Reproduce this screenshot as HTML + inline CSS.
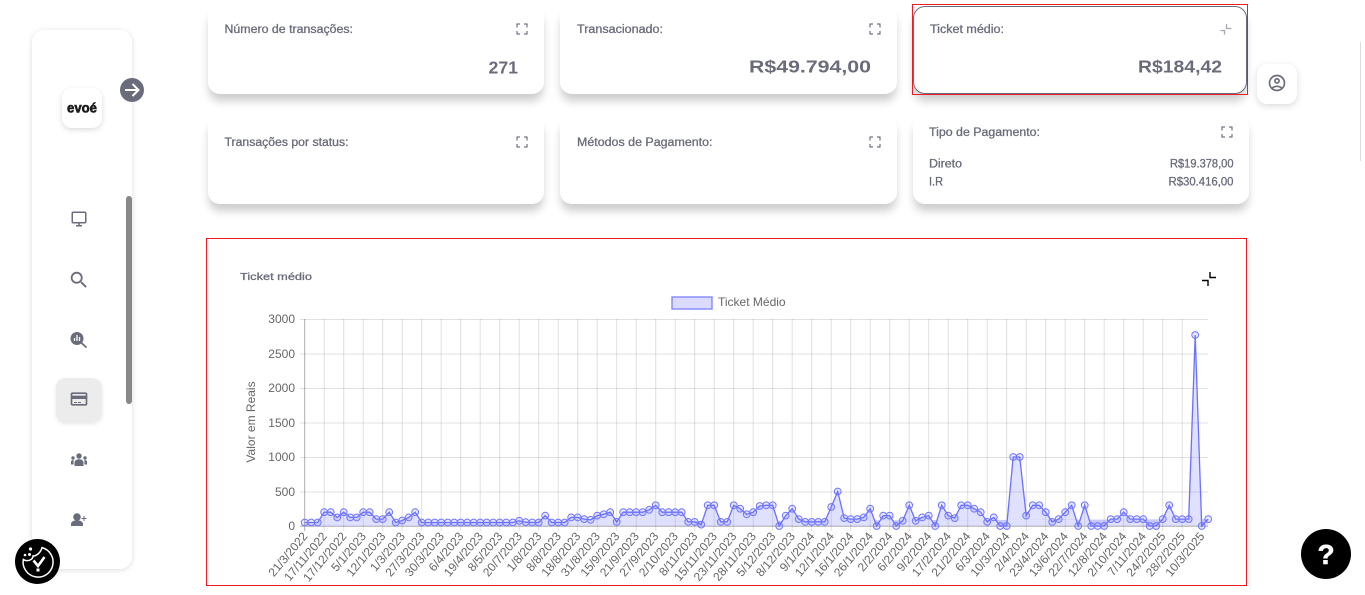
<!DOCTYPE html>
<html lang="pt-BR">
<head>
<meta charset="utf-8">
<title>Ticket médio</title>
<style>
html,body{margin:0;padding:0;background:#fff;width:1365px;height:595px;overflow:hidden}
.a{position:absolute;box-sizing:border-box;background:#fff}
.card{border-radius:12px;box-shadow:0 8px 9px -1px rgba(0,0,0,.2)}
#top{position:absolute;left:0;top:0}
svg text{font-family:"Liberation Sans",sans-serif}
.t{font-size:11.5px;fill:#6b6c7b;stroke:#6b6c7b;stroke-width:.3}
.v{font-size:17.5px;font-weight:700;fill:#6b6c7b}
.s{font-size:12px;fill:#666}
</style>
</head>
<body>
<div class="a" style="left:1360px;top:42px;width:1px;height:119px;background:#ddd"></div>
<div class="a" style="left:32px;top:30px;width:100px;height:539px;border-radius:12px;box-shadow:0 1px 6px rgba(0,0,0,.14)"></div>
<div class="a" style="left:126px;top:196px;width:6px;height:208px;border-radius:3px;background:#888"></div>
<div class="a" style="left:62px;top:88px;width:40px;height:40px;border-radius:10px;box-shadow:0 2px 6px rgba(0,0,0,.14)"></div>
<div class="a" style="left:56px;top:378px;width:46px;height:44px;border-radius:10px;background:#ececec;box-shadow:0 2px 5px rgba(0,0,0,.1)"></div>

<div class="a card" style="left:208px;top:6px;width:336px;height:88px"></div>
<div class="a card" style="left:560px;top:6px;width:337px;height:88px"></div>
<div class="a card" style="left:913px;top:6px;width:334px;height:87.500px;border:1px solid #6b6c7b"></div>
<div class="a card" style="left:208px;top:115px;width:336px;height:89px"></div>
<div class="a card" style="left:560px;top:115px;width:337px;height:89px"></div>
<div class="a card" style="left:913px;top:115px;width:336px;height:89px"></div>
<div class="a" style="left:1257px;top:64px;width:40px;height:40px;border-radius:10px;box-shadow:0 2px 7px rgba(0,0,0,.15)"></div>
<div class="a" style="left:208px;top:240px;width:1041px;height:350px;box-shadow:0 0 4px rgba(0,0,0,.12);clip-path:inset(0 -6px 0 -6px)"></div>

<svg id="top" width="1365" height="595" viewBox="0 0 1365 595" xmlns="http://www.w3.org/2000/svg">
<defs>
<marker id="m" markerUnits="userSpaceOnUse" markerWidth="10" markerHeight="10" refX="5" refY="5" overflow="visible">
<circle cx="5" cy="5" r="3.400" fill="rgba(100,105,255,.15)" stroke="#7075ff" stroke-width="1"/>
</marker>
<clipPath id="xc"><rect x="200" y="526" width="1040" height="56"/></clipPath>
</defs>

<!-- red outlines -->
<rect x="912.500" y="4.500" width="335" height="90" fill="none" stroke="#ee1c25"/>
<rect x="206.500" y="238.500" width="1040" height="347" fill="none" stroke="#ee1c25"/>

<!-- card text -->
<text class="t" x="224.500" y="33" textLength="128.500" lengthAdjust="spacingAndGlyphs">Número de transações:</text>
<text class="t" x="577" y="33" textLength="86" lengthAdjust="spacingAndGlyphs">Transacionado:</text>
<text class="t" x="930" y="33" textLength="74" lengthAdjust="spacingAndGlyphs">Ticket médio:</text>
<text class="t" x="224.500" y="146" textLength="124" lengthAdjust="spacingAndGlyphs">Transações por status:</text>
<text class="t" x="577" y="146" textLength="135.500" lengthAdjust="spacingAndGlyphs">Métodos de Pagamento:</text>
<text class="t" x="929" y="136" textLength="111" lengthAdjust="spacingAndGlyphs">Tipo de Pagamento:</text>
<text class="v" x="488.500" y="73.500" textLength="29.500" lengthAdjust="spacingAndGlyphs">271</text>
<text class="v" x="749" y="72.500" textLength="122" lengthAdjust="spacingAndGlyphs">R$49.794,00</text>
<text class="v" x="1138" y="72.500" textLength="84" lengthAdjust="spacingAndGlyphs">R$184,42</text>
<text class="t" x="929" y="167.500" textLength="33" lengthAdjust="spacingAndGlyphs">Direto</text>
<text class="t" x="929" y="185.500" textLength="14" lengthAdjust="spacingAndGlyphs">I.R</text>
<text class="t" x="1170" y="167.500" textLength="63.500" lengthAdjust="spacingAndGlyphs">R$19.378,00</text>
<text class="t" x="1168.500" y="185.500" textLength="65" lengthAdjust="spacingAndGlyphs">R$30.416,00</text>

<!-- card corner icons -->
<g fill="none" stroke="#55566a" stroke-width="1" transform="translate(-.5 0)">
<path d="M517.500 27.500v-3.500h3M524.500 24h3v3.500M527.500 31h0v3h-3M520.500 34h-3v-3"/>
<path d="M870.500 27.500v-3.500h3M877.500 24h3v3.500M880.500 31v3h-3M873.500 34h-3v-3"/>
<path d="M517.500 140.500v-3.500h3M524.500 137h3v3.500M527.500 144v3h-3M520.500 147h-3v-3"/>
<path d="M870.500 140.500v-3.500h3M877.500 137h3v3.500M880.500 144v3h-3M873.500 147h-3v-3"/>
<path d="M1222.500 130.500v-3.500h3M1229.500 127h3v3.500M1232.500 134v3h-3M1225.500 137h-3v-3"/>
</g>
<path d="M1226.500 24v4.500h5M1220.500 30.500h4v4" fill="none" stroke="#a4a5ae" stroke-width="1.300"/>
<path d="M1210 272v5.500h6M1202 280.500h6v5.500" fill="none" stroke="#000" stroke-width="1.400"/>

<!-- arrow button -->
<circle cx="132" cy="90" r="12" fill="#6b6c7b"/>
<path d="M125 90h13M132.500 84l6 6-6 6" fill="none" stroke="#fff" stroke-width="2"/>
<text x="82" y="112.500" text-anchor="middle" textLength="30" lengthAdjust="spacingAndGlyphs" style="font-size:13.500px;font-weight:700;fill:#1b1b1b;stroke:#1b1b1b;stroke-width:.6">evoé</text>

<!-- sidebar icons -->
<g fill="#6b6c7b">
<svg x="70" y="210" width="18" height="18" viewBox="0 0 24 24"><path d="M20 2H4c-1.100 0-2 .9-2 2v12c0 1.100.9 2 2 2h7v2H8v2h8v-2h-3v-2h7c1.100 0 2-.9 2-2V4c0-1.100-.9-2-2-2zm0 14H4V4h16v12z"/></svg>
<svg x="68" y="269" width="22" height="22" viewBox="0 0 24 24"><path d="M15.500 14h-.79l-.28-.27C15.410 12.590 16 11.110 16 9.500 16 5.910 13.090 3 9.500 3S3 5.910 3 9.500 5.910 16 9.500 16c1.610 0 3.090-.59 4.230-1.570l.27.28v.79l5 4.990L20.490 19l-4.990-5zm-6 0C7.010 14 5 11.990 5 9.500S7.010 5 9.500 5 14 7.010 14 9.500 11.990 14 9.500 14z"/></svg>
<circle cx="77" cy="338.500" r="6.500"/>
<path d="M81.500 343l5 4.500" stroke="#6b6c7b" stroke-width="1.800" fill="none"/>
<path d="M74.500 338v3M77 335v6M79.500 337v4" stroke="#fff" stroke-width="1.300" fill="none"/>
<svg x="69" y="389" width="20" height="20" viewBox="0 0 24 24"><path d="M20 4H4c-1.110 0-1.990.89-1.990 2L2 18c0 1.110.89 2 2 2h16c1.110 0 2-.89 2-2V6c0-1.110-.89-2-2-2zm0 14H4v-6h16v6zm0-10H4V6h16v2z"/></svg>
<path d="M74 402.500h3M78 402.500h3" stroke="#6b6c7b" fill="none"/>
<circle cx="79" cy="456" r="2.700"/>
<path d="M74.500 466v-3.500c0-2 2-3.300 4.500-3.300s4.500 1.300 4.500 3.300V466z"/>
<circle cx="73" cy="458" r="1.700"/><circle cx="85" cy="458" r="1.700"/>
<path d="M71 464.500v-2.800c0-1 .9-1.700 2.300-1.700l.3.200-.1 4.300zM87 464.500v-2.800c0-1-.9-1.700-2.300-1.700l-.3.200.1 4.300z"/>
<circle cx="77" cy="517" r="3.800"/>
<path d="M71 526v-2c0-2.500 3-3.800 6-3.800s6 1.300 6 3.800v2z"/>
<path d="M81.500 518.500h5M84 516v5" stroke="#6b6c7b" stroke-width="1" fill="none"/>
</g>

<!-- profile icon -->
<svg x="1267" y="73" width="20" height="20" viewBox="0 0 24 24" fill="#6b6c7b"><path d="M12 2C6.480 2 2 6.480 2 12s4.480 10 10 10 10-4.480 10-10S17.520 2 12 2zM7.350 18.500C8.660 17.560 10.260 17 12 17s3.340.56 4.650 1.500c-1.310.94-2.910 1.500-4.650 1.500s-3.340-.56-4.650-1.500zm10.790-1.380C16.450 15.800 14.320 15 12 15s-4.450.8-6.140 2.120C4.700 15.730 4 13.950 4 12c0-4.420 3.580-8 8-8s8 3.580 8 8c0 1.950-.7 3.730-1.860 5.120zM12 6c-1.930 0-3.500 1.570-3.500 3.500S10.070 13 12 13s3.500-1.570 3.500-3.500S13.930 6 12 6zm0 5c-.83 0-1.500-.67-1.500-1.500S11.170 8 12 8s1.500.67 1.500 1.500S12.830 11 12 11z"/></svg>

<!-- chart titles -->
<text class="t" x="240" y="280" textLength="72" lengthAdjust="spacingAndGlyphs" style="font-size:10.500px">Ticket médio</text>
<rect x="672" y="297" width="40" height="12" fill="rgba(100,105,255,.24)" stroke="#7c80ff" stroke-width="1.300"/>
<text class="s" x="718" y="306">Ticket Médio</text>
<text class="s" transform="translate(255 422) rotate(-90)" text-anchor="middle">Valor em Reais</text>

<!-- grid -->
<path d="M300 319.500H1208M300 354H1208M300 388.500H1208M300 423H1208M300 457.500H1208M300 492H1208" stroke="rgba(0,0,0,.12)" fill="none"/>
<path stroke="rgba(0,0,0,.12)" fill="none" d="M324.200 319v212m19.500-212v212m19.500-212v212m19.500-212v212m19.500-212v212m19.500-212v212m19.500-212v212m19.500-212v212m19.500-212v212m19.500-212v212m19.500-212v212m19.500-212v212m19.500-212v212m19.500-212v212m19.500-212v212m19.500-212v212m19.500-212v212m19.500-212v212m19.500-212v212m19.500-212v212m19.500-212v212m19.500-212v212m19.500-212v212m19.500-212v212m19.500-212v212m19.500-212v212m19.500-212v212m19.500-212v212m19.500-212v212m19.500-212v212m19.500-212v212m19.500-212v212m19.500-212v212m19.500-212v212m19.500-212v212m19.500-212v212m19.500-212v212m19.500-212v212m19.500-212v212m19.500-212v212m19.500-212v212m19.500-212v212m19.500-212v212m19.500-212v212m19.500-212v212"/>
<path d="M304.700 319v212M300 526.300H1208" stroke="rgba(0,0,0,.32)" fill="none"/>

<!-- y labels -->
<g class="s" text-anchor="end">
<text class="s" x="295" y="323">3000</text>
<text class="s" x="295" y="358">2500</text>
<text class="s" x="295" y="392">2000</text>
<text class="s" x="295" y="427">1500</text>
<text class="s" x="295" y="461">1000</text>
<text class="s" x="295" y="496">500</text>
<text class="s" x="295" y="530">0</text>
</g>

<!-- data -->
<g transform="translate(304.700 526)">
<polygon points="0,0 0,-3.500 903.500,-6.900 903.500,0" fill="rgba(100,105,255,.2)"/>
<polyline fill="rgba(100,105,255,.2)" stroke="#6a70ff" stroke-width="1.300" marker-start="url(#m)" marker-mid="url(#m)" marker-end="url(#m)" points="0,-3.500 6.500,-3.500 13,-3.500 19.500,-13.800 26,-13.800 32.500,-8.600 39,-13.800 45.500,-8.600 52,-8.600 58.500,-13.800 65,-13.800 71.500,-6.900 78,-6.900 84.500,-13.800 91,-3.500 97.500,-5.500 104,-8.600 110.500,-13.800 117,-3.500 123.500,-3.500 130,-3.500 136.500,-3.500 143,-3.500 149.500,-3.500 156,-3.500 162.500,-3.500 169,-3.500 175.500,-3.500 182,-3.500 188.500,-3.500 195,-3.500 201.500,-3.500 208,-3.500 214.500,-5.200 221,-3.800 227.500,-3.500 234,-3.500 240.500,-10.400 247,-3.500 253.500,-3.500 260,-3.500 266.500,-8.600 273,-8.600 279.500,-6.900 286,-6.200 292.500,-10.400 299,-11.700 305.500,-13.800 312,-4.100 318.500,-13.800 325,-13.800 331.500,-13.800 338,-13.800 344.500,-16.200 351,-20.700 357.500,-13.800 364,-13.800 370.500,-13.800 377,-13.800 383.500,-4.100 390,-4.100 396.500,-1.400 403,-20.700 409.500,-20.700 416,-4.100 422.500,-4.100 429,-20.700 435.500,-17.300 442,-11.700 448.500,-13.800 455,-20 461.500,-20.700 468,-20.700 474.500,0 481,-10.400 487.500,-17.300 494,-6.900 500.500,-4.100 507,-4.100 513.500,-4.100 520,-4.100 526.500,-19 533,-34.500 539.500,-7.900 546,-6.900 552.500,-6.900 559,-8.600 565.500,-17.300 572,0 578.500,-10.400 585,-10.400 591.500,0 598,-5.200 604.500,-20.700 611,-5.200 617.500,-8.600 624,-10.400 630.500,0 637,-20.700 643.500,-10.400 650,-7.900 656.500,-20.700 663,-20.700 669.500,-17.300 676,-13.800 682.500,-4.100 689,-8.600 695.500,0 702,0 708.500,-69 715,-69 721.500,-10.400 728,-20.700 734.500,-20.700 741,-13.800 747.500,-4.100 754,-6.900 760.500,-13.800 767,-20.700 773.500,0 780,-20.700 786.500,0 793,0 799.500,0 806,-6.900 812.500,-6.900 819,-13.800 825.500,-6.900 832,-6.900 838.500,-6.900 845,0 851.500,0 858,-6.900 864.500,-20.700 871,-6.900 877.500,-6.900 884,-6.900 890.500,-191 897,0 903.500,-6.900"/>
</g>

<!-- x labels -->
<g clip-path="url(#xc)">
<g transform="translate(3.500 536.500)" text-anchor="end">
<text class="s" transform="translate(304.700 0) rotate(-50)">21/3/2022</text>
<text class="s" transform="translate(324.200 0) rotate(-50)">17/11/2022</text>
<text class="s" transform="translate(343.700 0) rotate(-50)">17/12/2022</text>
<text class="s" transform="translate(363.200 0) rotate(-50)">5/1/2023</text>
<text class="s" transform="translate(382.700 0) rotate(-50)">12/1/2023</text>
<text class="s" transform="translate(402.200 0) rotate(-50)">1/3/2023</text>
<text class="s" transform="translate(421.700 0) rotate(-50)">27/3/2023</text>
<text class="s" transform="translate(441.200 0) rotate(-50)">30/3/2023</text>
<text class="s" transform="translate(460.700 0) rotate(-50)">6/4/2023</text>
<text class="s" transform="translate(480.200 0) rotate(-50)">19/4/2023</text>
<text class="s" transform="translate(499.700 0) rotate(-50)">8/5/2023</text>
<text class="s" transform="translate(519.200 0) rotate(-50)">20/7/2023</text>
<text class="s" transform="translate(538.700 0) rotate(-50)">1/8/2023</text>
<text class="s" transform="translate(558.200 0) rotate(-50)">8/8/2023</text>
<text class="s" transform="translate(577.700 0) rotate(-50)">18/8/2023</text>
<text class="s" transform="translate(597.200 0) rotate(-50)">31/8/2023</text>
<text class="s" transform="translate(616.700 0) rotate(-50)">15/9/2023</text>
<text class="s" transform="translate(636.200 0) rotate(-50)">21/9/2023</text>
<text class="s" transform="translate(655.700 0) rotate(-50)">27/9/2023</text>
<text class="s" transform="translate(675.200 0) rotate(-50)">2/10/2023</text>
<text class="s" transform="translate(694.700 0) rotate(-50)">8/11/2023</text>
<text class="s" transform="translate(714.200 0) rotate(-50)">15/11/2023</text>
<text class="s" transform="translate(733.700 0) rotate(-50)">23/11/2023</text>
<text class="s" transform="translate(753.200 0) rotate(-50)">28/11/2023</text>
<text class="s" transform="translate(772.700 0) rotate(-50)">5/12/2023</text>
<text class="s" transform="translate(792.200 0) rotate(-50)">8/12/2023</text>
<text class="s" transform="translate(811.700 0) rotate(-50)">9/1/2024</text>
<text class="s" transform="translate(831.200 0) rotate(-50)">12/1/2024</text>
<text class="s" transform="translate(850.700 0) rotate(-50)">16/1/2024</text>
<text class="s" transform="translate(870.200 0) rotate(-50)">26/1/2024</text>
<text class="s" transform="translate(889.700 0) rotate(-50)">2/2/2024</text>
<text class="s" transform="translate(909.200 0) rotate(-50)">6/2/2024</text>
<text class="s" transform="translate(928.700 0) rotate(-50)">9/2/2024</text>
<text class="s" transform="translate(948.200 0) rotate(-50)">17/2/2024</text>
<text class="s" transform="translate(967.700 0) rotate(-50)">21/2/2024</text>
<text class="s" transform="translate(987.200 0) rotate(-50)">6/3/2024</text>
<text class="s" transform="translate(1006.700 0) rotate(-50)">10/3/2024</text>
<text class="s" transform="translate(1026.200 0) rotate(-50)">2/4/2024</text>
<text class="s" transform="translate(1045.700 0) rotate(-50)">23/4/2024</text>
<text class="s" transform="translate(1065.200 0) rotate(-50)">13/6/2024</text>
<text class="s" transform="translate(1084.700 0) rotate(-50)">22/7/2024</text>
<text class="s" transform="translate(1104.200 0) rotate(-50)">12/8/2024</text>
<text class="s" transform="translate(1123.700 0) rotate(-50)">2/10/2024</text>
<text class="s" transform="translate(1143.200 0) rotate(-50)">7/11/2024</text>
<text class="s" transform="translate(1162.700 0) rotate(-50)">24/2/2025</text>
<text class="s" transform="translate(1182.200 0) rotate(-50)">28/2/2025</text>
<text class="s" transform="translate(1201.700 0) rotate(-50)">10/3/2025</text>
</g>
</g>

<!-- cookie button -->
<circle cx="37.500" cy="561.500" r="22.500" fill="#000"/>
<path d="M42 547.600A15 15 0 1 1 23.300 559.500C27 562 33 560 33 556C37 556 41 552 42 547.600Z" fill="none" stroke="#fff" stroke-width="1.500"/>
<circle cx="30.500" cy="549" r="1.600" fill="#fff"/><circle cx="25" cy="555" r="1.300" fill="#fff"/><circle cx="29.500" cy="554.500" r="1.500" fill="#fff"/>
<path d="M33.500 560.500l4.500 5.500 6.500-9" fill="none" stroke="#fff" stroke-width="2.600"/>
<rect x="36.500" y="568.500" width="3" height="3" fill="#fff"/>

<!-- help button -->
<circle cx="1326" cy="554" r="25" fill="#000"/>
<text x="1326" y="564" text-anchor="middle" style="font-size:28px;font-weight:700;fill:#fff;stroke:#fff;stroke-width:.6">?</text>
</svg>
</body>
</html>
